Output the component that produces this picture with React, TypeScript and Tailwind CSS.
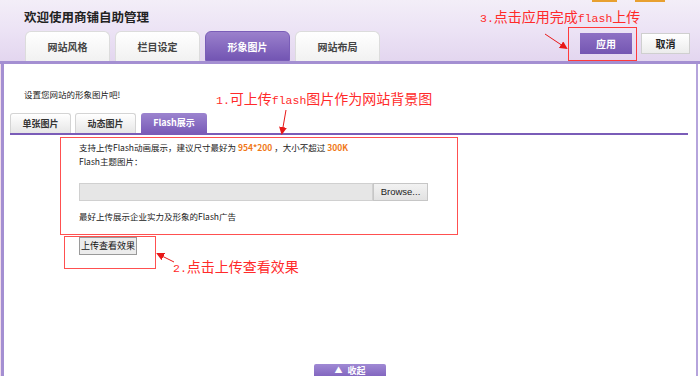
import React from 'react';

const cn = '"Noto Sans CJK SC", "Liberation Sans", sans-serif';
const mark = '"Liberation Mono", "Noto Sans CJK SC", monospace';

function TopTab({ label, active }: { label: string; active?: boolean }) {
  return (
    <div
      className={
        active
          ? 'w-[85px] h-[30px] rounded-t-[6px] flex items-center justify-center text-[10px] font-bold text-white bg-gradient-to-b from-[#9b80cc] to-[#7355b3] border border-[#7a5db8]'
          : 'w-[85px] h-[30px] rounded-t-[6px] flex items-center justify-center text-[10px] font-bold text-[#444] bg-gradient-to-b from-white to-[#f1f1f1] border border-[#dcdcdc] border-b-0'
      }
    >
      {label}
    </div>
  );
}

function SubTab({ label, active }: { label: string; active?: boolean }) {
  return (
    <div
      className={
        active
          ? 'w-[66px] h-[20px] rounded-t-[3px] flex items-center justify-center text-[9px] font-bold text-white bg-gradient-to-b from-[#9c84cf] to-[#7a5cb8]'
          : 'w-[61px] h-[20px] rounded-t-[3px] flex items-center justify-center text-[9px] font-bold text-[#333] bg-gradient-to-b from-white to-[#e6e6e6] border border-[#d4d4d4] border-b-0'
      }
    >
      {label}
    </div>
  );
}

function Note({ children }: { children: React.ReactNode }) {
  return (
    <div className="text-[14px] text-[#ff2a2a] leading-[18px] whitespace-nowrap" style={{ fontFamily: mark }}>
      {children}
    </div>
  );
}

const Lat = ({ t }: { t: string }) => <span className="text-[11.5px]">{t}</span>;

export default function App() {
  return (
    <div className="relative w-[700px] h-[376px] overflow-hidden bg-white" style={{ fontFamily: cn }}>
      {/* header */}
      <div className="h-[61px] bg-gradient-to-b from-[#f3eef8] via-[#ece3f5] to-[#e3d6ef] relative">
        <div className="absolute top-0 left-[592px] w-[25px] h-[2px] bg-[#e8a030]" />
        <div className="absolute top-0 left-[635px] w-[30px] h-[2px] bg-[#e8a030]" />
        <div className="pl-[24px] pt-[8px] h-[31px] text-[12.5px] font-bold text-[#222] leading-[18px]">
          欢迎使用商铺自助管理
        </div>
        <div className="flex items-end pl-[25px] pr-[10px]">
          <div className="flex gap-[5px]">
            <TopTab label="网站风格" />
            <TopTab label="栏目设定" />
            <TopTab label="形象图片" active />
            <TopTab label="网站布局" />
          </div>
          <div className="ml-auto flex gap-[9px] pb-[7px]">
            <button className="w-[52px] h-[21px] bg-gradient-to-b from-[#8e70c4] to-[#7456b2] text-white text-[10px] font-bold">
              应用
            </button>
            <button className="w-[49px] h-[21px] bg-gradient-to-b from-white to-[#ececec] border border-[#cfcfcf] text-[#222] text-[10px] font-bold">
              取消
            </button>
          </div>
        </div>
      </div>
      <div className="h-[3px] bg-[#a48fd2]" />

      {/* main panel */}
      <div className="border-l-[1px] border-l-[#f0dcea]">
        <div className="h-[312px] mr-[2px] border-l-[3px] border-l-[#a48fd2] border-r-2 border-r-[#b5a4dc] bg-white flex flex-col">
          <div className="pl-[20px] pt-[24px] text-[8.5px] text-[#222] h-[49px] leading-[12px]">设置您网站的形象图片吧!</div>
          <div className="flex items-end gap-[4px] pl-[6px]">
            <SubTab label="单张图片" />
            <SubTab label="动态图片" />
            <div className="ml-[1px]">
              <SubTab label="Flash展示" active />
            </div>
          </div>
          <div className="ml-[6px] mr-[8px] h-[2px] bg-[#7a5cb8]" />

          <div className="pl-[75px] pt-[5px] text-[8.5px] text-[#222] flex flex-col">
            <div className="h-[14px] leading-[14px]">
              支持上传Flash动画展示，建议尺寸最好为 <span className="font-bold text-[#f07818]">954*200</span> ，大小不超过{' '}
              <span className="font-bold text-[#f07818]">300K</span>
            </div>
            <div className="h-[14px] leading-[14px]">Flash主题图片：</div>
            <div className="flex mt-[15px] h-[18px]">
              <div className="w-[294px] bg-[#e6e6e6] border border-[#d0d0d0]" />
              <div
                className="w-[55px] border border-[#c6c6c6] bg-gradient-to-b from-[#f2f2f2] to-[#e2e2e2] text-[9.5px] text-[#222] flex items-center justify-center"
                style={{ fontFamily: '"Liberation Sans", sans-serif' }}
              >
                Browse...
              </div>
            </div>
            <div className="mt-[8px] h-[14px] leading-[14px]">最好上传展示企业实力及形象的Flash广告</div>
            <div className="mt-[14px]">
              <button className="h-[18px] px-[1px] bg-[#ececec] border border-[#9a9a9a] text-[9px] text-[#111] leading-[16px]">
                上传查看效果
              </button>
            </div>
          </div>

          <div className="mt-auto flex justify-center">
            <div className="w-[72px] h-[12px] rounded-t-[2px] bg-gradient-to-b from-[#a089d4] to-[#8367c0] text-white text-[9px] font-bold flex items-center justify-center gap-[5px] leading-none">
              <span className="text-[8px]">▲</span>收起
            </div>
          </div>
        </div>
      </div>
      <div className="h-[3px] bg-[#9d86d0]" />

      {/* annotations overlay */}
      <div className="absolute left-[568px] top-[27px] w-[69px] h-[34px] border border-[#ff3b3b]" />
      <div className="absolute left-[480px] top-[9px]">
        <Note>
          <Lat t="3." />点击应用完成<Lat t="flash" />上传
        </Note>
      </div>
      <div className="absolute left-[216px] top-[91px]">
        <Note>
          <Lat t="1." />可上传<Lat t="flash" />图片作为网站背景图
        </Note>
      </div>
      <div className="absolute left-[60px] top-[137px] w-[398px] h-[98px] border border-[#ff5050]" />
      <div className="absolute left-[64px] top-[236px] w-[92px] h-[33px] border border-[#ff5050]" />
      <div className="absolute left-[173px] top-[259px]">
        <Note>
          <Lat t="2." />点击上传查看效果
        </Note>
      </div>
      <svg className="absolute left-0 top-0" width="700" height="376">
        <defs>
          <marker id="ah" markerWidth="8" markerHeight="8" refX="6" refY="4" orient="auto">
            <path d="M0,0 L8,4 L0,8 z" fill="#e81818" />
          </marker>
        </defs>
        <line x1="545" y1="34" x2="566" y2="48" stroke="#e81818" strokeWidth="1" markerEnd="url(#ah)" />
        <line x1="286" y1="110" x2="282" y2="133" stroke="#e81818" strokeWidth="1" markerEnd="url(#ah)" />
        <line x1="174" y1="262" x2="158" y2="254" stroke="#e81818" strokeWidth="1" markerEnd="url(#ah)" />
      </svg>
    </div>
  );
}
